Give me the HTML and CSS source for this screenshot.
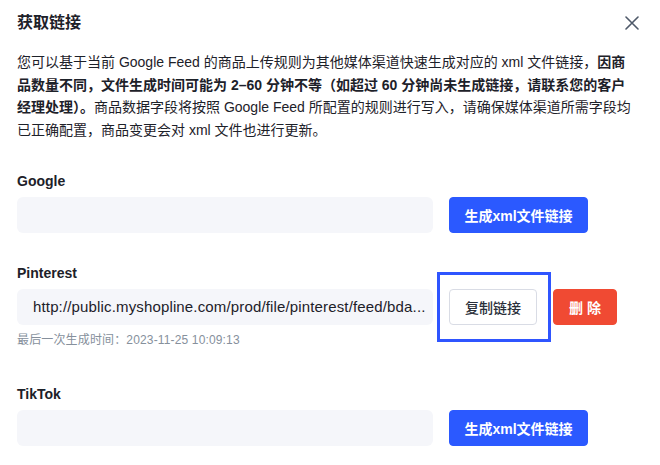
FILE: index.html
```html
<!DOCTYPE html>
<html lang="zh-CN">
<head>
  <meta charset="UTF-8" />
  <title>获取链接</title>
  <link rel="stylesheet" href="styles.css">
</head>
<body>
  <div class="modal">
    <div class="modal-header">
      <h2 class="modal-title">获取链接</h2>
      <button class="close-btn" aria-label="关闭">
        <svg width="14" height="14" viewBox="0 0 14 14"><path d="M1 1L13 13M13 1L1 13" stroke="#4e5969" stroke-width="1.6" stroke-linecap="round"/></svg>
      </button>
    </div>

    <p class="intro">您可以基于当前 Google Feed 的商品上传规则为其他媒体渠道快速生成对应的 xml 文件链接，<b>因商品数量不同，文件生成时间可能为 2–60 分钟不等（如超过 60 分钟尚未生成链接，请联系您的客户经理处理）。</b>商品数据字段将按照 Google Feed 所配置的规则进行写入，请确保媒体渠道所需字段均已正确配置，商品变更会对 xml 文件也进行更新。</p>

    <div class="channel channel-google">
      <div class="channel-name">Google</div>
      <div class="channel-row">
        <div class="link-box"></div>
        <button class="btn btn-primary">生成xml文件链接</button>
      </div>
    </div>

    <div class="channel channel-pinterest">
      <div class="channel-name">Pinterest</div>
      <div class="channel-row">
        <div class="link-box link-filled">http://public.myshopline.com/prod/file/pinterest/feed/bda...</div>
        <div class="highlight-wrap">
          <button class="btn btn-default">复制链接</button>
          <span class="highlight"></span>
        </div>
        <button class="btn btn-danger">删 除</button>
      </div>
      <div class="channel-time">最后一次生成时间：2023-11-25 10:09:13</div>
    </div>

    <div class="channel channel-tiktok">
      <div class="channel-name">TikTok</div>
      <div class="channel-row">
        <div class="link-box"></div>
        <button class="btn btn-primary">生成xml文件链接</button>
      </div>
    </div>
  </div>
</body>
</html>
```

FILE: styles.css
```css
body {
  margin: 0;
  background: #fff;
  color: #1d2129;
  font-family: "Liberation Sans", "Noto Sans CJK SC", sans-serif;
}
.modal {
  padding: 11px 21px 0 17px;
}
.modal-header {
  display: flex;
  justify-content: space-between;
  align-items: center;
  height: 24px;
}
.modal-title {
  margin: 0;
  font-size: 16px;
  font-weight: 700;
  line-height: 24px;
}
.close-btn {
  border: 0;
  background: none;
  padding: 0;
  width: 14px;
  height: 14px;
  display: flex;
}
.intro {
  margin: 16px 0 0;
  font-size: 14px;
  line-height: 22.6px;
}
.intro b {
  font-weight: 700;
}
.channel-google {
  margin-top: 30px;
}
.channel-pinterest {
  margin-top: 30px;
}
.channel-tiktok {
  margin-top: 35px;
}
.channel-name {
  font-size: 14px;
  font-weight: 700;
  line-height: 20px;
  margin-bottom: 6px;
}
.channel-row {
  display: flex;
  align-items: center;
  gap: 16px;
}
.link-box {
  width: 416px;
  height: 36px;
  box-sizing: border-box;
  background: #f5f6fa;
  border-radius: 6px;
  padding: 0 2px 0 16px;
  font-size: 15px;
  letter-spacing: 0.15px;
  line-height: 36px;
  color: #1d2129;
  white-space: nowrap;
  overflow: hidden;
  flex-shrink: 0;
}
.btn {
  height: 36px;
  box-sizing: border-box;
  border-radius: 4px;
  font-family: inherit;
  font-size: 14px;
  font-weight: 500;
  padding: 0;
  white-space: nowrap;
  cursor: pointer;
}
.btn-primary {
  width: 139px;
  background: #2b59ff;
  border: 1px solid #2b59ff;
  color: #fff;
  font-weight: 700;
}
.btn-default {
  width: 88px;
  background: #fff;
  border: 1px solid #d9dce5;
  color: #2a2f3a;
}
.btn-danger {
  width: 64px;
  background: #f04a33;
  border: 1px solid #f04a33;
  color: #fff;
  font-weight: 700;
}
.highlight-wrap {
  position: relative;
  display: flex;
}
.highlight {
  position: absolute;
  left: -12px;
  top: -17px;
  width: 114px;
  height: 70px;
  box-sizing: border-box;
  border: 3px solid #2f55ff;
  pointer-events: none;
}
.channel-time {
  margin-top: 6px;
  font-size: 12px;
  letter-spacing: 0.15px;
  line-height: 18px;
  color: #86909c;
}
```
